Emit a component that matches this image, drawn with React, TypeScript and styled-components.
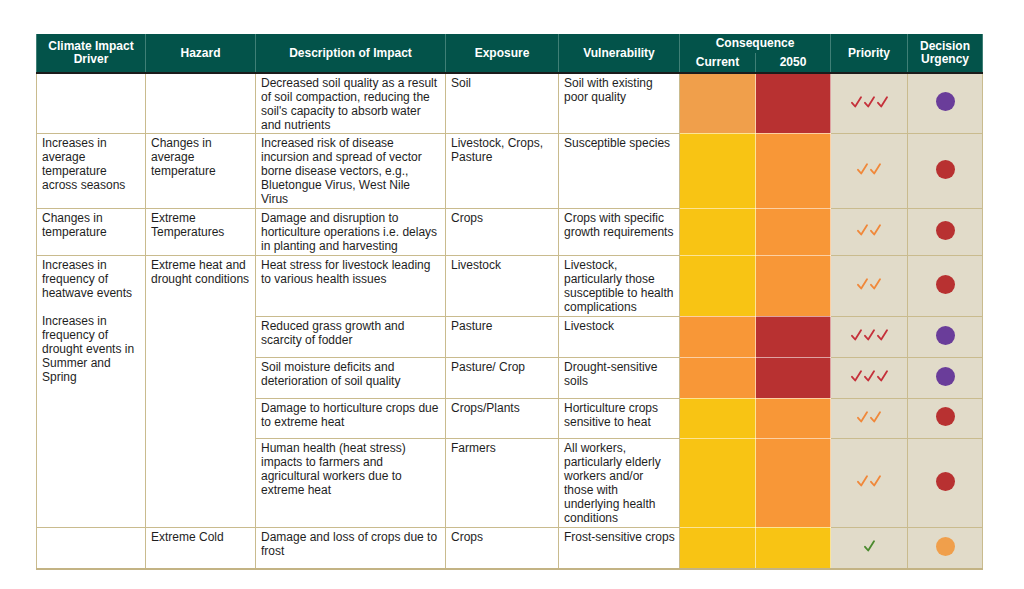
import styled, { createGlobalStyle } from "styled-components";

const Global = createGlobalStyle`
    body {
        margin: 0;
        background: #fff;
        font-family: "Liberation Sans", Arial, sans-serif;
    }
`

const Page = styled.div`
    padding: 34px 0 0 36px;
`
const Tabela = styled.table`
    border-collapse: collapse;
    table-layout: fixed;
    width: 946px;
    font-size: 12px;
    line-height: 14px;
    color: #1e1e1e;
    border-bottom: 2px solid #c3b384;
`
const Cabecalho = styled.th<{ $sub?: boolean }>`
    background: #03534a;
    color: #fff;
    font-weight: 700;
    font-size: 12px;
    line-height: 13px;
    text-align: center;
    vertical-align: middle;
    padding: 0 4px;
    border-left: 1px solid #3f7f76;
    border-right: 1px solid #3f7f76;
    border-bottom: ${p => (p.$sub ? "2px solid #1b1b1b" : "none")};
    height: 19px;
`
const CabecalhoAlto = styled(Cabecalho)`
    border-bottom: 2px solid #1b1b1b;
`
const Linha = styled.tr<{ $h: number }>`
    height: ${p => p.$h}px;
`
const Celula = styled.td<{ $pr?: number }>`
    vertical-align: top;
    padding: 2px ${p => p.$pr ?? 5}px 0 5px;
    border: 1px solid #c9bb8e;
    background: #fff;
    word-wrap: break-word;
`
const Paragrafo = styled.p`
    margin: 0 0 14px 0;
    &:last-child { margin: 0; }
`
const Nivel = styled.td<{ $cor: string }>`
    background: ${p => p.$cor};
    border: 1px solid rgba(255, 255, 255, 0.55);
    padding: 0;
`
const Prioridade = styled.td`
    background: #e1dbc9;
    border: 1px solid #c9bb8e;
    text-align: center;
    vertical-align: middle;
    padding: 0;
`
const Checks = styled.span`
    display: inline-flex;
    gap: 2px;
    align-items: center;
`
const Bola = styled.span<{ $cor: string }>`
    display: inline-block;
    width: 19px;
    height: 19px;
    border-radius: 50%;
    background: ${p => p.$cor};
`

const CORES = {
    laranjaClaro: "#f09f4b",
    laranja: "#f89737",
    vermelho: "#b83131",
    amarelo: "#f8c414",
    roxo: "#6a3d9a",
}

const CHECK_COR: Record<number, string> = { 3: "#c5303a", 2: "#f0883a", 1: "#4b8a2e" }

function Check({ cor }: { cor: string }) {
    return (
        <svg width="11" height="12" viewBox="0 0 11 12">
            <path d="M1 6.8 L4.2 10.5 L10 1.2" fill="none" stroke={cor} strokeWidth="1.8" strokeLinecap="round" strokeLinejoin="round" />
        </svg>
    )
}

function Marcas({ n }: { n: number }) {
    return (
        <Checks>
            {Array.from({ length: n }).map((_, i) => <Check key={i} cor={CHECK_COR[n]} />)}
        </Checks>
    )
}

type Linhadados = {
    h: number
    desc: string
    exp: string
    vul: string
    atual: string
    futuro: string
    prio: number
    urg: string
}

const linhas: Linhadados[] = [
    { h: 60, desc: "Decreased soil quality as a result of soil compaction, reducing the soil's capacity to absorb water and nutrients", exp: "Soil", vul: "Soil with existing poor quality", atual: CORES.laranjaClaro, futuro: CORES.vermelho, prio: 3, urg: CORES.roxo },
    { h: 75, desc: "Increased risk of disease incursion and spread of vector borne disease vectors, e.g., Bluetongue Virus, West Nile Virus", exp: "Livestock, Crops, Pasture", vul: "Susceptible species", atual: CORES.amarelo, futuro: CORES.laranja, prio: 2, urg: CORES.vermelho },
    { h: 47, desc: "Damage and disruption to horticulture operations i.e. delays in planting and harvesting", exp: "Crops", vul: "Crops with specific growth requirements", atual: CORES.amarelo, futuro: CORES.laranja, prio: 2, urg: CORES.vermelho },
    { h: 61, desc: "Heat stress for livestock leading to various health issues", exp: "Livestock", vul: "Livestock, particularly those susceptible to health complications", atual: CORES.amarelo, futuro: CORES.laranja, prio: 2, urg: CORES.vermelho },
    { h: 41, desc: "Reduced grass growth and scarcity of fodder", exp: "Pasture", vul: "Livestock", atual: CORES.laranja, futuro: CORES.vermelho, prio: 3, urg: CORES.roxo },
    { h: 41, desc: "Soil moisture deficits and deterioration of soil quality", exp: "Pasture/ Crop", vul: "Drought-sensitive soils", atual: CORES.laranja, futuro: CORES.vermelho, prio: 3, urg: CORES.roxo },
    { h: 40, desc: "Damage to horticulture crops due to extreme heat", exp: "Crops/Plants", vul: "Horticulture crops sensitive to heat", atual: CORES.amarelo, futuro: CORES.laranja, prio: 2, urg: CORES.vermelho },
    { h: 89, desc: "Human health (heat stress) impacts to farmers and agricultural workers due to extreme heat", exp: "Farmers", vul: "All workers, particularly elderly workers and/or those with underlying health conditions", atual: CORES.amarelo, futuro: CORES.laranja, prio: 2, urg: CORES.vermelho },
    { h: 42, desc: "Damage and loss of crops due to frost", exp: "Crops", vul: "Frost-sensitive crops", atual: CORES.amarelo, futuro: CORES.amarelo, prio: 1, urg: CORES.laranjaClaro },
]

function Esquerda({ i }: { i: number }) {
    if (i === 0) return (<><Celula /><Celula /></>)
    if (i === 1) return (<><Celula>Increases in average temperature across seasons</Celula><Celula>Changes in average temperature</Celula></>)
    if (i === 2) return (<><Celula>Changes in temperature</Celula><Celula>Extreme Temperatures</Celula></>)
    if (i === 3) return (
        <>
            <Celula rowSpan={5}>
                <Paragrafo>Increases in frequency of heatwave events</Paragrafo>
                <Paragrafo>Increases in frequency of drought events in Summer and Spring</Paragrafo>
            </Celula>
            <Celula rowSpan={5}>Extreme heat and drought conditions</Celula>
        </>
    )
    if (i === 8) return (<><Celula /><Celula>Extreme Cold</Celula></>)
    return null
}

export default function App() {
    return (
        <Page>
            <Global />
            <Tabela>
                <colgroup>
                    <col style={{ width: 109 }} />
                    <col style={{ width: 110 }} />
                    <col style={{ width: 190 }} />
                    <col style={{ width: 113 }} />
                    <col style={{ width: 121 }} />
                    <col style={{ width: 76 }} />
                    <col style={{ width: 75 }} />
                    <col style={{ width: 77 }} />
                    <col style={{ width: 75 }} />
                </colgroup>
                <thead>
                    <tr>
                        <CabecalhoAlto rowSpan={2}>Climate Impact Driver</CabecalhoAlto>
                        <CabecalhoAlto rowSpan={2}>Hazard</CabecalhoAlto>
                        <CabecalhoAlto rowSpan={2}>Description of Impact</CabecalhoAlto>
                        <CabecalhoAlto rowSpan={2}>Exposure</CabecalhoAlto>
                        <CabecalhoAlto rowSpan={2}>Vulnerability</CabecalhoAlto>
                        <Cabecalho colSpan={2}>Consequence</Cabecalho>
                        <CabecalhoAlto rowSpan={2}>Priority</CabecalhoAlto>
                        <CabecalhoAlto rowSpan={2}>Decision Urgency</CabecalhoAlto>
                    </tr>
                    <tr>
                        <Cabecalho $sub>Current</Cabecalho>
                        <Cabecalho $sub>2050</Cabecalho>
                    </tr>
                </thead>
                <tbody>
                    {linhas.map((l, i) => (
                        <Linha key={i} $h={l.h}>
                            <Esquerda i={i} />
                            <Celula>{l.desc}</Celula>
                            <Celula>{l.exp}</Celula>
                            <Celula $pr={3}>{l.vul}</Celula>
                            <Nivel $cor={l.atual} />
                            <Nivel $cor={l.futuro} />
                            <Prioridade><Marcas n={l.prio} /></Prioridade>
                            <Prioridade><Bola $cor={l.urg} /></Prioridade>
                        </Linha>
                    ))}
                </tbody>
            </Tabela>
        </Page>
    )
}
